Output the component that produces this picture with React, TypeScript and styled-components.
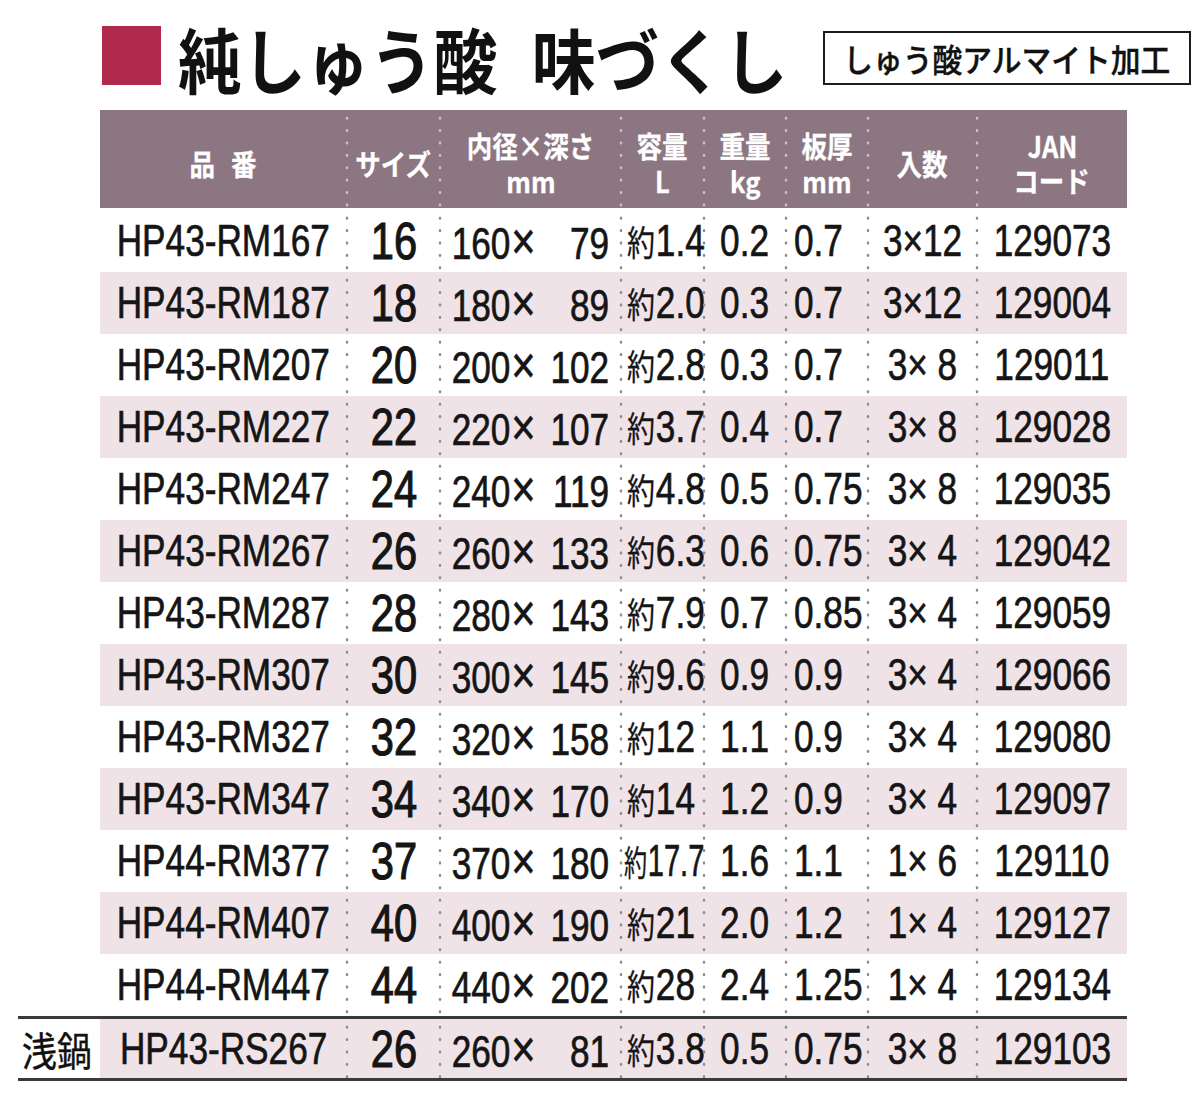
import React from "react";
import styled, { createGlobalStyle } from "styled-components";

const GlobalStyle = createGlobalStyle`
  html, body { margin: 0; padding: 0; background: #ffffff; }
  body {
    width: 1200px;
    height: 1109px;
    overflow: hidden;
    font-family: "Liberation Sans", "Noto Sans CJK JP", sans-serif;
    color: #151515;
  }
`;

const COLS = "247px 93px 181px 83px 82px 82px 109px 150px";
const JP = `"Noto Sans CJK JP", "Noto Sans", sans-serif`;

const Page = styled.div`
  width: 1200px;
  height: 1109px;
`;

const TitleBar = styled.header`
  display: flex;
  align-items: center;
  height: 110px;
  padding: 0 9px 0 102px;
  box-sizing: border-box;
`;

const Square = styled.div`
  width: 59px;
  height: 59px;
  background: #b02a4c;
  flex-shrink: 0;
  margin-right: 17px;
`;

const TitleText = styled.h1`
  flex: 1;
  min-width: 0;
  margin: 0;
  font-family: ${JP};
  font-weight: 700;
  font-size: 71px;
  line-height: 1;
  color: #111;
  white-space: nowrap;
  padding-top: 4px;
`;

const TitleGap = styled.span`
  display: inline-block;
  width: 38px;
`;

const Badge = styled.div`
  width: 368px;
  height: 54px;
  box-sizing: border-box;
  border: 2px solid #1c1c1c;
  display: flex;
  align-items: center;
  justify-content: center;
  font-family: ${JP};
  font-weight: 500;
  font-size: 32px;
  color: #111;
  margin-top: 6px;
  flex-shrink: 0;
  -webkit-text-stroke: 0.4px #111;
`;

const Squash = styled.span<{ $sx?: number; $origin?: string }>`
  display: inline-block;
  white-space: pre;
  transform: scaleX(${(p) => p.$sx ?? 0.8});
  transform-origin: ${(p) => p.$origin ?? "center"};
`;

const Table = styled.div`
  margin-left: 18px;
  width: 1109px;
`;

const Row = styled.div<{ $ruled?: boolean }>`
  display: flex;
  height: ${(p) => (p.$ruled ? "59px" : "62px")};
  border-top: ${(p) => (p.$ruled ? "3px solid #3a3a3a" : "none")};
  border-bottom: ${(p) => (p.$ruled ? "3px solid #3a3a3a" : "none")};
`;

const HeadRow = styled.div`
  display: flex;
  height: 98px;
  margin-bottom: 2px;
`;

const Label = styled.div`
  width: 82px;
  flex-shrink: 0;
  display: flex;
  align-items: center;
  justify-content: center;
  padding-right: 4px;
  box-sizing: border-box;
  font-family: ${JP};
  font-size: 40px;
  color: #111;
  -webkit-text-stroke: 0.3px #111;
`;

const Cells = styled.div<{ $shade?: boolean; $header?: boolean }>`
  flex: 1;
  display: grid;
  grid-template-columns: ${COLS};
  background: ${(p) => (p.$header ? "#8c7682" : p.$shade ? "#efe3e8" : "#ffffff")};
  --dot: ${(p) => (p.$header ? "#cdbdc5" : "#8e8e8e")};
`;

const Cell = styled.div<{ $align?: "left" | "center"; $pad?: number }>`
  position: relative;
  display: flex;
  align-items: center;
  justify-content: ${(p) => (p.$align === "left" ? "flex-start" : "center")};
  padding-left: ${(p) => p.$pad ?? 0}px;
  font-size: 44px;
  line-height: 1;
  -webkit-text-stroke: 0.7px #151515;
  &:not(:first-child)::before {
    content: "";
    position: absolute;
    left: -2px;
    top: 0;
    bottom: 0;
    width: 4px;
    background-image: radial-gradient(circle at center, var(--dot) 0 1.1px, transparent 1.7px);
    background-size: 4px 12.4px;
    background-repeat: repeat-y;
    background-position: 0 2px;
  }
`;

const SizeText = styled(Squash)`
  font-size: 52px;
  -webkit-text-stroke: 1.2px #151515;
`;

const DimRow = styled.span`
  display: inline-flex;
  align-items: baseline;
`;

const Times = styled.span`
  display: inline-block;
  width: 50px;
  font-size: 52px;
  padding-left: 1px;
  box-sizing: border-box;
`;

const Depth = styled.span`
  display: inline-block;
  min-width: 73.4px;
  text-align: right;
`;

const Approx = styled.span`
  font-family: ${JP};
  font-size: 35px;
  -webkit-text-stroke: 0.3px #151515;
  margin-right: 1px;
`;

const HeadCell = styled(Cell)`
  flex-direction: column;
  justify-content: center;
  align-items: center;
  padding-top: 8px;
  box-sizing: border-box;
  font-family: ${JP};
  font-weight: 700;
  font-size: 29px;
  color: #ffffff;
  -webkit-text-stroke: 0.3px #ffffff;
`;

const HeadLine = styled(Squash)`
  line-height: 35px;
`;

const Spaced = styled.span`
  letter-spacing: 18px;
  margin-right: -18px;
`;

type Item = [string, string, string, string, string, string, string, string, string];

const rows: Item[] = [
  ["HP43-RM167", "16", "160", "79", "1.4", "0.2", "0.7", "3×12", "129073"],
  ["HP43-RM187", "18", "180", "89", "2.0", "0.3", "0.7", "3×12", "129004"],
  ["HP43-RM207", "20", "200", "102", "2.8", "0.3", "0.7", "3× 8", "129011"],
  ["HP43-RM227", "22", "220", "107", "3.7", "0.4", "0.7", "3× 8", "129028"],
  ["HP43-RM247", "24", "240", "119", "4.8", "0.5", "0.75", "3× 8", "129035"],
  ["HP43-RM267", "26", "260", "133", "6.3", "0.6", "0.75", "3× 4", "129042"],
  ["HP43-RM287", "28", "280", "143", "7.9", "0.7", "0.85", "3× 4", "129059"],
  ["HP43-RM307", "30", "300", "145", "9.6", "0.9", "0.9", "3× 4", "129066"],
  ["HP43-RM327", "32", "320", "158", "12", "1.1", "0.9", "3× 4", "129080"],
  ["HP43-RM347", "34", "340", "170", "14", "1.2", "0.9", "3× 4", "129097"],
  ["HP44-RM377", "37", "370", "180", "17.7", "1.6", "1.1", "1× 6", "129110"],
  ["HP44-RM407", "40", "400", "190", "21", "2.0", "1.2", "1× 4", "129127"],
  ["HP44-RM447", "44", "440", "202", "28", "2.4", "1.25", "1× 4", "129134"],
];

const shallow: Item = ["HP43-RS267", "26", "260", "81", "3.8", "0.5", "0.75", "3× 8", "129103"];

const DataCells: React.FC<{ item: Item; shade: boolean }> = ({ item, shade }) => {
  const [code, size, dia, depth, cap, weight, thick, qty, jan] = item;
  const capScale = cap.length > 3 ? 0.66 : 0.8;
  return (
    <Cells $shade={shade}>
      <Cell>
        <Squash>{code}</Squash>
      </Cell>
      <Cell>
        <SizeText>{size}</SizeText>
      </Cell>
      <Cell>
        <Squash>
          <DimRow>
            {dia}
            <Times>×</Times>
            <Depth>{depth}</Depth>
          </DimRow>
        </Squash>
      </Cell>
      <Cell $align="left" $pad={cap.length > 3 ? 3 : 6}>
        <Squash $origin="left" $sx={capScale}>
          <Approx>約</Approx>
          {cap}
        </Squash>
      </Cell>
      <Cell>
        <Squash>{weight}</Squash>
      </Cell>
      <Cell $align="left" $pad={8}>
        <Squash $origin="left">{thick}</Squash>
      </Cell>
      <Cell>
        <Squash>{qty}</Squash>
      </Cell>
      <Cell>
        <Squash>{jan}</Squash>
      </Cell>
    </Cells>
  );
};

const headers: string[][] = [
  ["品番"],
  ["サイズ"],
  ["内径×深さ", "mm"],
  ["容量", "L"],
  ["重量", "kg"],
  ["板厚", "mm"],
  ["入数"],
  ["JAN", "コード"],
];

export default function App() {
  return (
    <Page>
      <GlobalStyle />
      <TitleBar>
        <Square />
        <TitleText>
          <Squash $sx={0.9} $origin="left">
            純しゅう酸
            <TitleGap />
            味づくし
          </Squash>
        </TitleText>
        <Badge>
          <Squash $sx={0.93}>しゅう酸アルマイト加工</Squash>
        </Badge>
      </TitleBar>
      <Table>
        <HeadRow>
          <Label />
          <Cells $header>
            {headers.map((lines, i) => (
              <HeadCell key={i}>
                {lines.map((l, j) => (
                  <HeadLine key={j} $sx={0.88}>
                    {i === 0 ? <Spaced>{l}</Spaced> : l}
                  </HeadLine>
                ))}
              </HeadCell>
            ))}
          </Cells>
        </HeadRow>
        {rows.map((item, i) => (
          <Row key={item[0]}>
            <Label />
            <DataCells item={item} shade={i % 2 === 1} />
          </Row>
        ))}
        <Row $ruled>
          <Label>
            <Squash $sx={0.88}>浅鍋</Squash>
          </Label>
          <DataCells item={shallow} shade />
        </Row>
      </Table>
    </Page>
  );
}
